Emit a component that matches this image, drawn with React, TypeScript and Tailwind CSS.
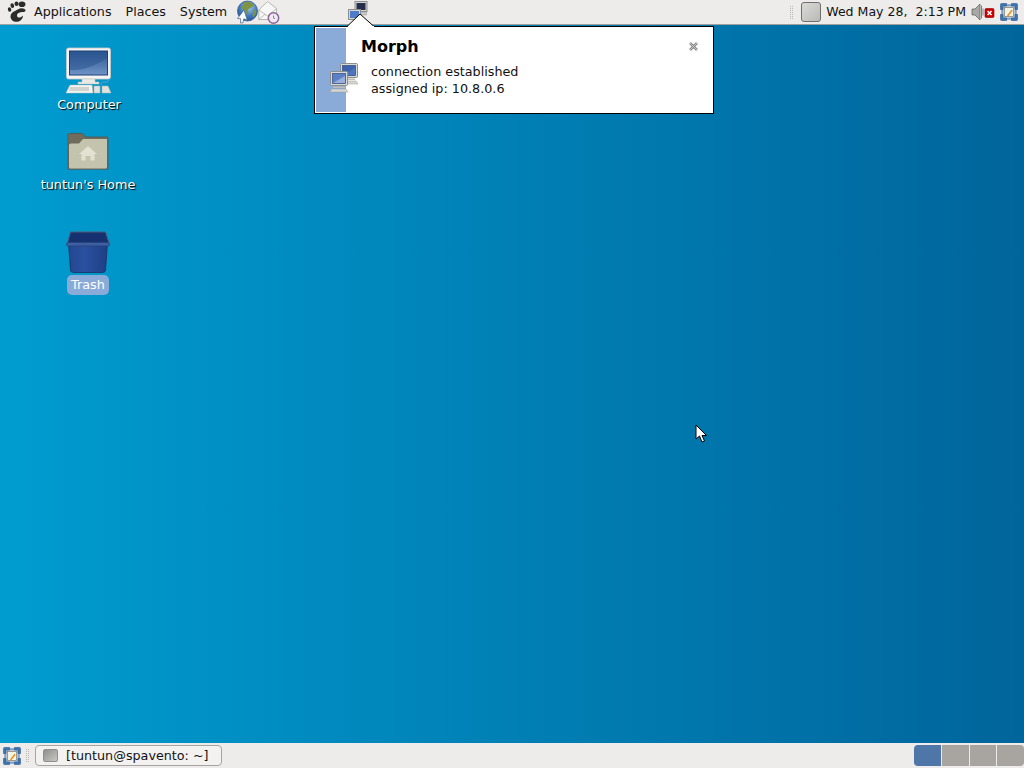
import React from "react";

const font = { fontFamily: '"DejaVu Sans", sans-serif' };

function Foot() {
  return (
    <svg width="20" height="22" viewBox="0 0 20 22">
      <g fill="#2b2b29">
        <ellipse cx="2.600" cy="8.500" rx="1.700" ry="2.300" transform="rotate(-15 2.600 8.500)" />
        <ellipse cx="5.300" cy="4.600" rx="1.800" ry="2.400" transform="rotate(-15 5.300 4.600)" />
        <ellipse cx="9.500" cy="2.800" rx="2" ry="2.300" />
        <ellipse cx="15" cy="3.200" rx="3.400" ry="2.800" />
        <path d="M14.500 7.200c2.600 0 4.300 1.200 4 2.600-.3 1.300-2.500 1.200-4.800 1.500-2.200.3-3.700 1.500-3.700 3.100 0 1.400 1.200 2.200 2.700 2 1.300-.2 2.300-1 3.200-2 .4 3-2.700 6.400-6.400 6.400-3.600 0-6-2.300-6-5.300 0-3 2.200-4.600 4.600-5.600 2.300-1 4-2.700 6.400-2.700z" />
      </g>
    </svg>
  );
}

function Globe() {
  return (
    <svg width="22" height="24" viewBox="0 0 22 24">
      <defs>
        <radialGradient id="gl" cx="0.55" cy="0.3" r="0.75">
          <stop offset="0" stopColor="#a9cdee" />
          <stop offset="0.6" stopColor="#3f77b8" />
          <stop offset="1" stopColor="#234f8e" />
        </radialGradient>
      </defs>
      <circle cx="11.500" cy="11" r="10" fill="url(#gl)" stroke="#31598e" strokeWidth="0.8" />
      <path d="M8 2.500c3-1 7-.5 9 1.500 1 1.500-.5 3-2 3.500-1 1.500-3 1-3.500 2.500 1.500 1 1 3-.5 4-1.500-1-1.500-3-3-4-1.500-.5-3-1.500-2-3.500 1-1 2-2.500 2-4z" fill="#7f9440" />
      <path d="M17 10c1.500-.5 3 0 3.500 1-.3 3-1.500 5-3.500 6.500-1-2 .5-5 0-7.500z" fill="#7f9440" />
      <path d="M8 10 1.500 18.500l3.200.2-.2 4.300 2.500-.2.800-4 3.500 1.500z" fill="#fff" stroke="#3e5d86" strokeWidth="0.7" />
    </svg>
  );
}

function MailClock() {
  return (
    <svg width="22" height="24" viewBox="0 0 22 24">
      <path d="M.800 10 9.500 1.500 18.500 8.500v11H.800z" fill="#f7f7f5" stroke="#aeaeaa" strokeWidth="0.9" />
      <path d="M.800 10l8.700 6 9-7.500M.800 19.500l6.700-5.500M18.500 19.500l-6-5.500" fill="none" stroke="#b9b9b4" strokeWidth="0.9" />
      <circle cx="15.500" cy="18" r="5.200" fill="#efe9f2" stroke="#8a6599" strokeWidth="1.500" />
      <path d="M15.500 15.500v2.500l1.500 .8" fill="none" stroke="#8a6599" strokeWidth="0.9" />
    </svg>
  );
}

function Pc({ x, y, back = false }: { x: number; y: number; back?: boolean }) {
  return (
    <g transform={`translate(${x} ${y})`}>
      <rect x="0.500" y="0.500" width="17" height="14" rx="1" fill="#d8d8d4" stroke="#8d8f8c" />
      <rect x="2.500" y="2.500" width="13" height="10" fill={back ? "#3c62ad" : "#5a80c6"} stroke="#2f4a80" strokeWidth="0.7" />
      <path d="M3 12 15 5v7z" fill={back ? "#4f76bd" : "#9ab0dc"} />
      <path d="M3 15.500h12v1.500H3z" fill="#bdbdb9" />
      <path d="M1.500 18H16l2 3H0z" fill="#d6d6d3" stroke="#9a9a96" strokeWidth="0.5" />
    </g>
  );
}

function TinyNet() {
  return (
    <svg width="24" height="24" viewBox="0 0 24 24">
      <g transform="translate(7.500 1)">
        <rect x="0.500" y="0.500" width="12" height="10" fill="#d4d4d0" stroke="#8d8f8c" />
        <rect x="2" y="2" width="9" height="7" fill="#252e4c" />
        <path d="M1 11h11v3H1z" fill="#c9c9c6" stroke="#999" strokeWidth="0.5" />
      </g>
      <g transform="translate(1 9)">
        <rect x="0.500" y="0.500" width="12" height="10" fill="#d4d4d0" stroke="#8d8f8c" />
        <rect x="2" y="2" width="9" height="7" fill="#4f7cca" />
      </g>
    </svg>
  );
}

function NetLarge() {
  return (
    <svg width="32" height="32" viewBox="0 0 32 32">
      <Pc x={11} y={1} back />
      <Pc x={1} y={9} />
    </svg>
  );
}

function ComputerIcon() {
  return (
    <svg width="48" height="48" viewBox="0 0 48 48">
      <defs>
        <linearGradient id="scr" x1="0" y1="0" x2="0" y2="1">
          <stop offset="0" stopColor="#2a5490" />
          <stop offset="1" stopColor="#6f93c6" />
        </linearGradient>
      </defs>
      <rect x="1.500" y="1" width="44" height="31" rx="2" fill="#f4f4f2" stroke="#c9c9c6" strokeWidth="0.8" />
      <rect x="4.500" y="4" width="38" height="24" fill="url(#scr)" stroke="#1e3f78" strokeWidth="1" />
      <path d="M5 23c13 1 26-5 37-12V5H5z" fill="#2c5690" opacity="0.55" />
      <path d="M17 32h13v3h4v2H13v-2h4z" fill="#e9e9e6" stroke="#bdbdb9" strokeWidth="0.5" />
      <path d="M5 38h22l1 8H1z" fill="#f4f4f1" stroke="#c0c0bc" strokeWidth="0.5" />
      <path d="M5 40h19v4H4z" fill="#d2d2ce" />
      <path d="M29 39h6v7h-6zM37 39h6l3 7h-9z" fill="#e1e1dd" stroke="#b5b5b0" strokeWidth="0.5" />
      <path d="M36 38c0-3 2-3 4-3s4 0 3-2" fill="none" stroke="#7aa9cc" strokeWidth="0.8" />
    </svg>
  );
}

function FolderIcon() {
  return (
    <svg width="44" height="40" viewBox="0 0 44 40">
      <path d="M2 37V4q0-1.500 1.500-1.500h13l3 3.500h21q1.500 0 1.500 1.500V37q0 1.500-1.500 1.500h-37Q2 38.500 2 37z" fill="#6f6c5c" stroke="#55554c" strokeWidth="0.8" />
      <path d="M3 36V14q0-1.500 2-1.500h8l4-4.500h24v28q0 1.500-1.500 1.500h-35Q3 37.500 3 36z" fill="#c4c3ae" />
      <path d="M3 38.500h38" stroke="#3f6f84" strokeWidth="1.200" />
      <path d="M22 15l9 8h-2.500v6.500h-4v-4.500h-5v4.500h-4V23H13z" fill="#e2e1d2" />
    </svg>
  );
}

function TrashIcon() {
  return (
    <svg width="46" height="44" viewBox="0 0 46 44">
      <defs>
        <linearGradient id="tb" x1="0" y1="0" x2="1" y2="0">
          <stop offset="0" stopColor="#24478f" />
          <stop offset="0.4" stopColor="#2a509f" />
          <stop offset="1" stopColor="#1f3f85" />
        </linearGradient>
      </defs>
      <path d="M3.500 12h39l-2 27q0 2.500-3 2.500H8.500q-3 0-3-2.500z" fill="url(#tb)" stroke="#1c2f5e" strokeWidth="0.8" />
      <path d="M2.500 12 5.500 1h35L44 12z" fill="#16316f" stroke="#4d5d79" strokeWidth="1" />
      <rect x="1.500" y="11.500" width="43" height="3.500" rx="1.500" fill="#3a5fa4" stroke="#2a3f6e" strokeWidth="0.7" />
    </svg>
  );
}

function Desk() {
  return (
    <svg width="18" height="18" viewBox="0 0 18 18">
      <rect x="2" y="2" width="14" height="14" fill="#b9c7d6" stroke="#4a78b0" />
      <rect x="4.500" y="4.500" width="9" height="9" fill="#f3f3e2" stroke="#7d7d72" strokeWidth="0.7" />
      <path d="M.500 6.500V1.500q0-1 1-1h5v2.500h-3.500v3.500zM11.500.500h5q1 0 1 1v5H15V3h-3.500zM.500 11.500H3V15h3.500v2.500h-5q-1 0-1-1zM15 11.500h2.500v5q0 1-1 1h-5V15H15z" fill="#3d76b5" stroke="#2b568c" strokeWidth="0.6" />
      <path d="M7.500 11.800l4-5 1.200 1-4 5-1.700.6z" fill="#e0902a" />
    </svg>
  );
}

function Handle() {
  return (
    <div className="grid grid-cols-2 gap-x-[1px] gap-y-[1px]">
      {Array.from({ length: 14 }).map((_, i) => (
        <div key={i} className="w-[1px] h-[1px] bg-[#b8b7b4]" />
      ))}
    </div>
  );
}

function Volume() {
  return (
    <svg width="24" height="20" viewBox="0 0 24 20">
      <path d="M1 7h3l5-5v16l-5-5H1z" fill="#a8a8a4" stroke="#5a5a58" strokeWidth="0.7" />
      <path d="M10.500 3.500v13M12 6.500v7" stroke="#808080" />
      <rect x="14" y="6.500" width="9" height="9" rx="1.200" fill="#cc0000" stroke="#8a0000" strokeWidth="0.6" />
      <path d="M16.500 9l4 4M20.500 9l-4 4" stroke="#fff" strokeWidth="1.600" />
    </svg>
  );
}

function DesktopItem({ label, className, children, selected = false }: { label: string; className: string; children: React.ReactNode; selected?: boolean }) {
  return (
    <div className={`absolute flex flex-col items-center ${className}`}>
      {children}
      <div
        className={
          selected
            ? "px-[4px] h-[20px] leading-[19px] rounded-[5px] bg-[#8aabd8] text-[12.800px] text-white"
            : "text-[12.800px] leading-[19px] text-white whitespace-nowrap [text-shadow:1px_1px_1px_#000]"
        }
      >
        {label}
      </div>
    </div>
  );
}

export default function App() {
  return (
    <div className="w-[1024px] h-[768px] flex flex-col overflow-hidden relative" style={font}>
      <header className="h-[25px] shrink-0 bg-[#edeceb] border-b border-b-[#a09f9c] flex items-center text-[12.700px] text-[#111111]">
        <div className="ml-[7px] w-[20px] flex"><Foot /></div>
        <span className="ml-[7px]">Applications</span>
        <span className="ml-[14px]">Places</span>
        <span className="ml-[14px]">System</span>
        <div className="ml-[9px] flex"><Globe /></div>
        <div className="flex"><MailClock /></div>
        <div className="ml-[67px] flex"><TinyNet /></div>
        <div className="ml-auto flex items-center">
          <Handle />
          <div className="ml-[8px] w-[20px] h-[20px] rounded-[3px] border border-[#6f6f6c] bg-gradient-to-br from-[#dadad6] to-[#b9b9b5]" />
          <span className="ml-[5px] text-[12.550px] whitespace-pre">Wed May 28,  2:13 PM</span>
          <div className="ml-[5px] flex"><Volume /></div>
          <div className="ml-[5px] mr-[6px] flex"><Desk /></div>
        </div>
      </header>

      <main className="flex-1 relative bg-gradient-to-r from-[#009cd0] to-[#00659b]">
        <DesktopItem label="Computer" className="left-[40px] top-[22px] w-[98px]"><ComputerIcon /></DesktopItem>
        <DesktopItem label="tuntun's Home" className="left-[39px] top-[106px] w-[98px]"><div className="h-[44px]"><FolderIcon /></div></DesktopItem>
        <DesktopItem label="Trash" selected className="left-[39px] top-[206px] w-[98px]"><TrashIcon /></DesktopItem>

        <div className="absolute left-[314px] top-[1px] w-[400px] h-[88px] bg-white border border-black flex">
          <div className="mt-[1px] mb-[1px] ml-[1px] w-[30px] bg-[#8aabd8] relative">
            <div className="absolute left-[13px] top-[34px] flex"><NetLarge /></div>
          </div>
          <div className="flex-1 flex flex-col pl-[15px] pr-[14px] relative">
            <div className="mt-[9px] h-[22px] flex items-center justify-between">
              <span className="text-[16px] leading-[22px] text-black" style={{ fontWeight: 600 }}>Morph</span>
              <svg width="11" height="11" viewBox="0 0 11 11" className="-mt-[1px]">
                <path d="M2 2l7 7M9 2l-7 7" stroke="#8a8a88" strokeWidth="2.600" />
                <path d="M2 2l7 7M9 2l-7 7" stroke="#c4c4c2" strokeWidth="1" />
              </svg>
            </div>
            <div className="mt-[5px] pl-[10px] text-[12.760px] leading-[17px] text-[#111111]">
              <div>connection established</div>
              <div>assigned ip: 10.8.0.6</div>
            </div>
          </div>
        </div>
        <svg width="30" height="14" viewBox="0 0 30 14" className="absolute left-[346px] -top-[12px]">
          <path d="M1 13.500 14 1 28 13.500" fill="#fff" stroke="#000" />
          <path d="M2 14h26v-1H2z" fill="#fff" />
        </svg>

        <svg width="13" height="19" viewBox="0 0 13 19" className="absolute left-[695px] top-[399px]">
          <path d="M1 1v14l3.500-3 2.500 6 2.500-1-2.500-5.500H11.500z" fill="#fff" stroke="#000" strokeWidth="1" />
        </svg>
      </main>

      <footer className="h-[25px] shrink-0 bg-[#edeceb] flex items-center text-[12.730px] text-[#111111]">
        <div className="ml-[3px] flex"><Desk /></div>
        <div className="ml-[5px]"><Handle /></div>
        <div className="ml-[6px] w-[187px] h-[21px] rounded-[4px] border border-[#a5a4a1] bg-[#f3f2f1] flex items-center">
          <div className="ml-[7px] w-[15px] h-[13px] rounded-[2px] border border-[#8f8f8c] bg-gradient-to-br from-[#8f908c] to-[#c8c8c4]" />
          <span className="ml-[8px] whitespace-nowrap">[tuntun@spavento: ~]</span>
        </div>
        <div className="ml-auto w-[110px] h-[21px] rounded-[4px] overflow-hidden flex gap-[1px]">
          <div className="flex-1 bg-[#4e76a9]" />
          <div className="flex-1 bg-[#a8a49f]" />
          <div className="flex-1 bg-[#a8a49f]" />
          <div className="flex-1 bg-[#a8a49f]" />
        </div>
      </footer>
    </div>
  );
}
